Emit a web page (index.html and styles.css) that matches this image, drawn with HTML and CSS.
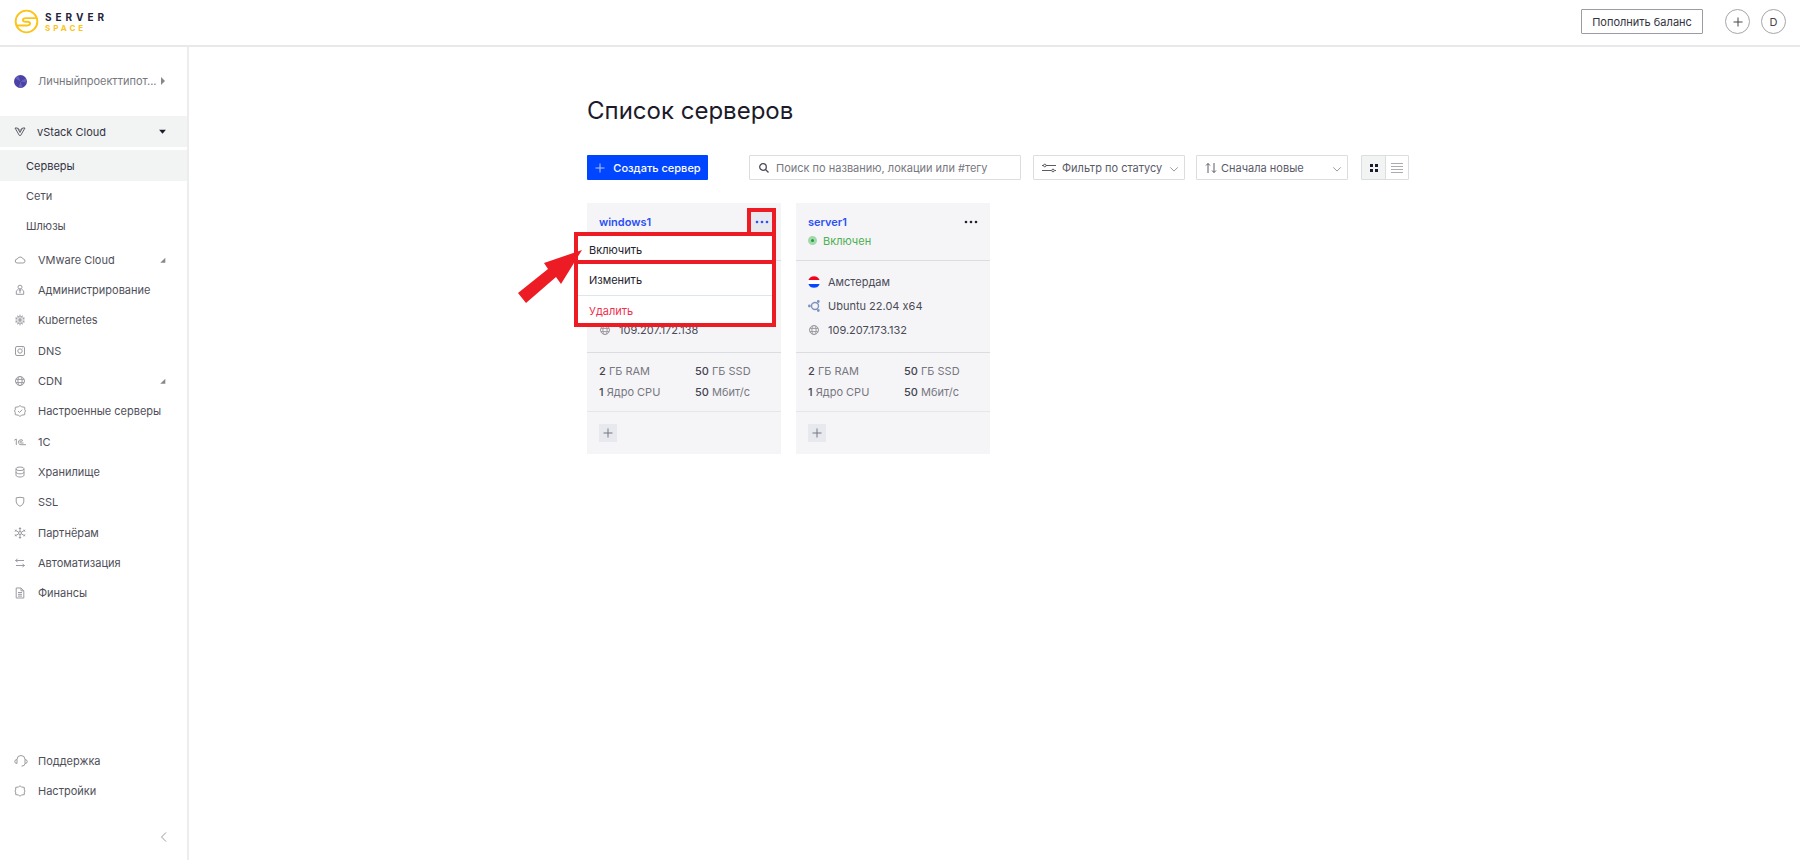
FILE: index.html
```html
<!DOCTYPE html>
<html lang="ru">
<head>
<meta charset="utf-8">
<title>Список серверов</title>
<link rel="stylesheet" href="styles.css">
</head>
<body>
<svg class="defs" aria-hidden="true">
  <symbol id="globe" viewBox="0 0 12 12"><circle cx="6" cy="6" r="4.5"/><ellipse cx="6" cy="6" rx="2.1" ry="4.5"/><path d="M2 4.400h8M2 7.600h8"/></symbol>
  <symbol id="plus" viewBox="0 0 12 12"><path d="M6 1.500v9M1.500 6h9"/></symbol>
  <symbol id="chevron" viewBox="0 0 12 12"><path d="M1.500 4L6 8.500 10.500 4"/></symbol>
  <symbol id="dots" viewBox="0 0 14 4"><circle cx="2" cy="2" r="1.3"/><circle cx="7" cy="2" r="1.3"/><circle cx="12" cy="2" r="1.3"/></symbol>
</svg>

<header class="header">
  <a class="logo" href="#" aria-label="Serverspace">
    <svg class="logo-mark" viewBox="0 0 26 26"><circle cx="13" cy="13" r="11.3"/><path d="M23.700 9.500H12.500q-3.200 0-3.200 1.900t3.200 1.900h1.200q3 0 3 1.900t-3 1.900H2.600"/></svg>
    <span class="logo-text"><span class="logo-top">SERVER</span><span class="logo-bottom">SPACE</span></span>
  </a>
  <div class="header-actions">
    <button class="balance">Пополнить баланс</button>
    <button class="round" aria-label="Добавить"><svg class="icon"><use href="#plus"/></svg></button>
    <button class="round">D</button>
  </div>
</header>

<div class="layout">
  <aside class="sidebar">
    <button class="project">
      <svg class="project-mark" viewBox="0 0 12 12"><circle cx="6" cy="6" r="6" fill="#4a42a5"/><path d="M6 6L1 3l3-2zM6 6l5-3v4zM6 6l2 5.500-4 .2z" fill="#665fbb"/></svg>
      <span>Личныйпроекттипот...</span>
      <svg class="mini" viewBox="0 0 6 8"><path d="M1 0l4 4-4 4z" fill="#888"/></svg>
    </button>
    <nav class="nav">
      <a class="item open" href="#"><svg class="icon" viewBox="0 0 12 12"><path d="M1 2h2.500L6 6.500 8.500 2H11L6.600 9.500H5.400zM3.500 2L6 4.500 8.500 2"/></svg><span>vStack Cloud</span><svg class="caret" viewBox="0 0 8 8"><path d="M1 2.500h6L4 6z" fill="#1b1b2b"/></svg></a>
      <div class="sub">
        <a class="subitem active" href="#">Серверы</a>
        <a class="subitem" href="#">Сети</a>
        <a class="subitem" href="#">Шлюзы</a>
      </div>
      <div class="group">
        <a class="item" href="#"><svg class="icon" viewBox="0 0 12 12"><path d="M3.200 9h5.600a2 2 0 0 0 .4-4A3.200 3.200 0 0 0 3.300 5a2 2 0 0 0-.1 4z"/></svg><span>VMware Cloud</span><svg class="caret" viewBox="0 0 8 8"><path d="M2 6h4.500V1.500z" fill="#888"/></svg></a>
        <a class="item" href="#"><svg class="icon" viewBox="0 0 12 12"><circle cx="6" cy="3.200" r="2"/><path d="M4.300 5.200L2.300 7v3.300h7.400V7L7.700 5.200M6 4v5M4.700 6.200h2.600"/></svg><span>Администрирование</span></a>
        <a class="item" href="#"><svg class="icon thin" viewBox="0 0 12 12"><circle cx="6" cy="6" r="4"/><path d="M6 .5v11M1 3.800l10 4.400M1 8.200l10-4.400M3.500 10.600L8.500 1.400M8.500 10.600L3.500 1.400"/></svg><span>Kubernetes</span></a>
      </div>
      <div class="group">
        <a class="item" href="#"><svg class="icon" viewBox="0 0 12 12"><rect x="1.500" y="1.500" width="9" height="9" rx="1.500"/><circle cx="6" cy="6" r="2.200"/><path d="M8.300 3.200h.6"/></svg><span>DNS</span></a>
        <a class="item" href="#"><svg class="icon"><use href="#globe"/></svg><span>CDN</span><svg class="caret" viewBox="0 0 8 8"><path d="M2 6h4.500V1.500z" fill="#888"/></svg></a>
        <a class="item" href="#"><svg class="icon" viewBox="0 0 12 12"><path d="M6 .6l1.700 1.200 3 .5.1 2.500.7 1.200-.7 1.200-.1 2.500-3 .5L6 11.400l-1.700-1.200-3-.5-.1-2.500L.5 6l.7-1.200.1-2.500 3-.5zM4 6l1.500 1.500L8.200 4.700"/></svg><span>Настроенные серверы</span></a>
      </div>
      <div class="group">
        <a class="item" href="#"><svg class="icon" viewBox="0 0 12 12"><path d="M.3 4.200L2.300 3V9M9 4.800A2.500 2.500 0 1 0 7 8.700h5M7.900 5.800a1 1 0 1 0-.9 1.200h2.500"/></svg><span>1С</span></a>
        <a class="item" href="#"><svg class="icon" viewBox="0 0 12 12"><ellipse cx="6" cy="2.800" rx="4" ry="1.800"/><path d="M2 2.800v6.400c0 2.400 8 2.400 8 0V2.800M2 6c0 2.400 8 2.400 8 0"/></svg><span>Хранилище</span></a>
        <a class="item" href="#"><svg class="icon" viewBox="0 0 12 12"><path d="M2.200 1.800Q6 .8 9.800 1.800V6Q9.300 9 6 10.300 2.700 9 2.200 6z"/></svg><span>SSL</span></a>
      </div>
      <div class="group">
        <a class="item" href="#"><svg class="icon" viewBox="0 0 12 12"><circle cx="6" cy="6" r="1.500"/><path d="M6 .3v4.200M6 7.500v4.200M.8 3l3.900 2.200M7.300 6.800l3.900 2.200M.8 9l3.900-2.200M7.300 5.200L11.200 3M4.800 1.500h2.400M4.800 10.500h2.400M1 4.700l1.300-2M11 4.700l-1.300-2M1 7.300l1.300 2M11 7.300l-1.300 2"/></svg><span>Партнёрам</span></a>
        <a class="item" href="#"><svg class="icon" viewBox="0 0 12 12"><path d="M10 3.500H1.500M3.500 2L1.500 3.500l2 1.500M2 8.500h8.500M8.500 7l2 1.500-2 1.500"/></svg><span>Автоматизация</span></a>
        <a class="item" href="#"><svg class="icon" viewBox="0 0 12 12"><path d="M2.200 1h4.800l2.800 2.800V11H2.200zM7 1v2.800h2.800M4 5.500h4M4 7.300h4M4 9.100h4"/></svg><span>Финансы</span></a>
      </div>
    </nav>
    <div class="sidebar-bottom">
      <a class="item" href="#"><svg class="icon wide" viewBox="0 0 14 12"><path d="M3 8.500V4.500a4 4 0 0 1 8 0V8.500Q11 11 7.500 11.200M3 4.500Q.8 4.500.8 6.500T3 8.500M11 4.500q2.200 0 2.200 2T11 8.500"/></svg><span>Поддержка</span></a>
      <a class="item" href="#"><svg class="icon" viewBox="0 0 12 12"><path d="M6 .8l1.600 1.200 2.700.4V5l.8 1-.8 1v2.600l-2.700.4L6 11.200 4.400 10l-2.700-.4V7L.9 6l.8-1V2.400L4.400 2z"/></svg><span>Настройки</span></a>
      <button class="collapse" aria-label="Свернуть меню"><svg viewBox="0 0 8 12"><path d="M6 1.500L1.500 6 6 10.500"/></svg></button>
    </div>
  </aside>

  <main class="main">
    <div class="content">
      <h1 class="title">Список серверов</h1>
      <div class="toolbar">
        <button class="create"><svg class="icon"><use href="#plus"/></svg>Создать сервер</button>
        <label class="field search">
          <svg class="icon" viewBox="0 0 12 12"><circle cx="5" cy="5" r="3.300"/><path d="M7.500 7.500l3 3"/></svg>
          <input type="text" placeholder="Поиск по названию, локации или #тегу" aria-label="Поиск">
        </label>
        <label class="field pick">
          <svg class="icon wide" viewBox="0 0 14 12"><path d="M4 3.500h10M0 3.500h1.500M0 8.500h9.500M12.500 8.500H14"/><circle cx="2.800" cy="3.500" r="1.300"/><circle cx="11" cy="8.500" r="1.300"/></svg>
          <select aria-label="Статус"><option>Фильтр по статусу</option></select>
          <svg class="arrow"><use href="#chevron"/></svg>
        </label>
        <label class="field pick sort">
          <svg class="icon" viewBox="0 0 12 12"><path d="M3 11V1.500M1 3.500l2-2 2 2M9 1v9.500M7 8.500l2 2 2-2"/></svg>
          <select aria-label="Сортировка"><option>Сначала новые</option></select>
          <svg class="arrow"><use href="#chevron"/></svg>
        </label>
        <div class="views">
          <button class="view on" aria-label="Плитка"><svg viewBox="0 0 8 8"><path d="M0 0h3v3H0zM5 0h3v3H5zM0 5h3v3H0zM5 5h3v3H5z" fill="#1b1b2b"/></svg></button>
          <button class="view" aria-label="Список"><svg class="list" viewBox="0 0 12 10"><path d="M0 .5h12M0 3.500h12M0 6.500h12M0 9.500h12" stroke="#aaacb2"/></svg></button>
        </div>
      </div>

      <div class="cards">
        <article class="card">
          <div class="card-head">
            <a class="name" href="#">windows1</a>
            <button class="more pressed" aria-label="Действия"><svg><use href="#dots"/></svg></button>
          </div>
          <div class="card-info">
            <div class="info ip"><svg class="icon"><use href="#globe"/></svg>109.207.172.138</div>
          </div>
          <div class="specs">
            <span><b>2</b> ГБ RAM</span><span><b>50</b> ГБ SSD</span>
            <span><b>1</b> Ядро CPU</span><span><b>50</b> Мбит/с</span>
          </div>
          <div class="card-foot"><button class="tag" aria-label="Добавить тег"><svg class="icon"><use href="#plus"/></svg></button></div>

          <div class="menu">
            <button>Включить</button>
            <button>Изменить</button>
            <button class="danger">Удалить</button>
          </div>
          <div class="frame frame-more"></div>
          <div class="frame frame-menu"></div>
          <div class="frame frame-on"></div>
          <svg class="pointer" viewBox="0 0 66 56"><path d="M64 2L26 15l4 6L0 45l8 10 30-26 5 7z" fill="#ed1c24"/></svg>
        </article>

        <article class="card">
          <div class="card-head">
            <a class="name" href="#">server1</a>
            <button class="more" aria-label="Действия"><svg><use href="#dots"/></svg></button>
            <div class="status"><span class="lamp"></span>Включен</div>
          </div>
          <div class="card-info">
            <div class="info"><svg class="icon" viewBox="0 0 12 12"><circle cx="6" cy="6" r="6" fill="#fff" stroke="none"/><path d="M.4 4a6 6 0 0 1 11.200 0z" fill="#f5001d" stroke="none"/><path d="M.4 8a6 6 0 0 0 11.200 0z" fill="#0b46ff" stroke="none"/></svg>Амстердам</div>
            <div class="info"><svg class="icon ubuntu" viewBox="0 0 12 12"><circle cx="7" cy="6" r="3.500"/><circle cx="1.400" cy="6" r=".7"/><circle cx="10.300" cy="1.500" r=".7"/><circle cx="10.300" cy="10.500" r=".7"/></svg>Ubuntu 22.04 x64</div>
            <div class="info ip"><svg class="icon"><use href="#globe"/></svg>109.207.173.132</div>
          </div>
          <div class="specs">
            <span><b>2</b> ГБ RAM</span><span><b>50</b> ГБ SSD</span>
            <span><b>1</b> Ядро CPU</span><span><b>50</b> Мбит/с</span>
          </div>
          <div class="card-foot"><button class="tag" aria-label="Добавить тег"><svg class="icon"><use href="#plus"/></svg></button></div>
        </article>
      </div>
    </div>
  </main>
</div>
</body>
</html>
```
FILE: styles.css
```css
* { box-sizing: border-box; }
body {
  margin: 0;
  min-height: 100vh;
  display: flex;
  flex-direction: column;
  font: 11px/16px Inter, "Open Sans", sans-serif;
  font-variant-ligatures: no-contextual;
  color: #4b4b57;
  background: #fff;
}
button, input, select { font: inherit; font-variant-ligatures: inherit; color: inherit; margin: 0; padding: 0; border: 0; background: none; }
a { color: inherit; text-decoration: none; }
svg { fill: none; stroke: none; flex: none; }
.defs { position: absolute; width: 0; height: 0; }
.icon { width: 12px; height: 12px; stroke: currentColor; stroke-width: 1; }
.icon.wide { width: 14px; }
.icon.thin { stroke-width: .7; }

/* Header */
.header {
  height: 47px;
  display: flex;
  align-items: center;
  justify-content: space-between;
  padding: 0 14px 2px 14px;
  border-bottom: 2px solid #e9e9ea;
}
.logo { display: flex; align-items: center; gap: 6px; }
.logo-mark { width: 25px; height: 25px; stroke: #fcc419; stroke-width: 2; }
.logo-text { display: flex; flex-direction: column; font-weight: 700; }
.logo-top { font-size: 10px; line-height: 12px; letter-spacing: 4px; color: #23233a; }
.logo-bottom { font-size: 8px; line-height: 10px; letter-spacing: 3px; color: #fcc419; }
.header-actions { display: flex; align-items: center; }
.balance {
  height: 25px;
  width: 122px;
  margin-right: 22px;
  border: 1px solid #9b9ba3;
  border-radius: 1px;
  color: #33333f;
}
.round {
  width: 25px;
  height: 25px;
  display: flex;
  align-items: center;
  justify-content: center;
  border: 1px solid #a5a5ac;
  border-radius: 50%;
  color: #44444f;
  margin-left: 11px;
}
.balance + .round { margin-left: 0; }

/* Sidebar */
.layout { flex: 1; display: flex; }
.sidebar {
  width: 189px;
  flex: none;
  display: flex;
  flex-direction: column;
  border-right: 2px solid #ededee;
  padding-top: 19px;
  color: #4f4f5a;
}
.project { height: 30px; display: flex; align-items: center; padding-left: 14px; color: #777780; }
.project-mark { width: 13px; height: 13px; margin-right: 11px; }
.mini { width: 6px; height: 8px; margin-left: 4px; }
.nav { margin-top: 20px; }
.item { height: 30px; display: flex; align-items: center; padding: 0 20px 0 14px; }
.item .icon { margin-right: 12px; color: #9b9ba1; }
.item .icon.wide { margin-right: 10px; }
.item .caret { width: 9px; height: 9px; margin-left: auto; }
.item.open { height: 31px; background: #f2f4f4; color: #33333f; }
.item.open .icon { color: #5f5f69; margin-right: 11px; }
.sub { padding: 3px 0 4px; }
.subitem { height: 30px; display: flex; align-items: center; padding-left: 26px; }
.subitem.active { height: 31px; background: #f2f4f4; color: #33333f; }
.group { padding-bottom: 1px; }
.sidebar-bottom { margin-top: auto; padding-bottom: 12px; display: flex; flex-direction: column; }
.collapse { align-self: flex-end; width: 22px; height: 22px; margin: 20px 12px 0 0; display: flex; align-items: center; justify-content: center; }
.collapse svg { width: 8px; height: 12px; stroke: #9b9ba1; }

/* Content */
.main { flex: 1; min-width: 0; padding: 47px 0 0 7px; }
.content { max-width: 822px; margin: 0 auto; }
.title { margin: 0; font-size: 24px; line-height: 34px; font-weight: 400; color: #1b1b2b; }
.toolbar { display: flex; align-items: center; margin-top: 27px; }
.create {
  width: 121px;
  height: 25px;
  display: flex;
  align-items: center;
  justify-content: center;
  gap: 7px;
  margin-right: 41px;
  border-radius: 1px;
  background: #0045ff;
  color: #fff;
  font-weight: 500;
}
.create .icon { opacity: .7; }
.field { height: 25px; display: flex; align-items: center; border: 1px solid #dcdde0; border-radius: 1px; }
.search { flex: 1; padding: 0 8px; gap: 6px; margin-right: 12px; }
.search .icon { stroke-width: 1.3; }
.search input { flex: 1; min-width: 0; outline: 0; }
.search input::placeholder { color: #777780; opacity: 1; }
.pick { width: 152px; padding: 0 5px 0 8px; gap: 6px; margin-right: 11px; color: #5a5a68; }
.pick select { flex: 1; min-width: 0; appearance: none; outline: 0; }
.sort { padding-left: 8px; gap: 4px; margin-right: 13px; }
.arrow { width: 10px; height: 10px; stroke: #85858c; margin-top: 3px; }
.views { display: flex; border: 1px solid #dcdde0; border-radius: 1px; }
.view { width: 22px; height: 23px; display: flex; align-items: center; justify-content: center; }
.view.on { width: 24px; background: #f2f4f4; border-right: 1px solid #dcdde0; }
.view svg { width: 8px; height: 8px; }
.view .list { width: 12px; height: 10px; }

/* Cards */
.cards { display: flex; flex-wrap: wrap; align-items: flex-start; gap: 15px; margin-top: 23px; }
.card { position: relative; width: 194px; background: #f5f5f8; }
.card-head {
  height: 58px;
  display: grid;
  grid-template-columns: 1fr auto;
  grid-auto-rows: 19px;
  align-items: center;
  padding: 9px 8px 0 12px;
  border-bottom: 1px solid #dcdde1;
}
.name { font-weight: 600; color: #2b50f5; }
.more { width: 22px; height: 20px; display: flex; align-items: center; justify-content: center; color: #22222c; }
.more svg { width: 14px; height: 4px; fill: currentColor; }
.more.pressed { background: #e8e9ee; color: #2b50f5; }
.status { display: flex; align-items: center; gap: 6px; color: #4caf50; }
.lamp { width: 9px; height: 9px; border-radius: 50%; border: 3px solid #a3d8ab; background: #1f9d3f; }
.card-info { height: 92px; display: flex; flex-direction: column; justify-content: flex-end; gap: 7px; padding: 0 12px 14px; border-bottom: 1px solid #dcdde1; }
.info { height: 17px; display: flex; align-items: center; gap: 8px; }
.info .icon { color: #9b9ba1; }
.info .ubuntu { color: #7f93be; stroke-width: 1.4; }
.specs { display: grid; grid-template-columns: 96px 1fr; row-gap: 5px; padding: 10px 0 11px 12px; border-bottom: 1px solid #e6e6ea; color: #777780; }
.specs b { font-weight: 500; color: #44444f; }
.card-foot { height: 42px; padding: 12px; }
.tag { width: 18px; height: 18px; display: flex; align-items: center; justify-content: center; background: #e8e9ee; color: #777780; }

/* Action menu and the marks over it */
.menu { position: absolute; left: -10px; top: 32px; width: 196px; background: #fff; }
.menu button { display: block; width: 100%; height: 30px; padding-left: 12px; text-align: left; color: #22222c; }
.menu .danger { height: 31px; border-top: 1px solid #dfe5ec; color: #f0304f; }
.frame { position: absolute; border: 4px solid #ed1c24; }
.frame-more { left: 160px; top: 5px; width: 29px; height: 28px; }
.frame-menu { left: -13px; top: 29px; width: 202px; height: 95px; }
.frame-on { left: -13px; top: 29px; width: 202px; height: 32px; }
.pointer { position: absolute; left: -69px; top: 45px; width: 66px; height: 56px; }
```
